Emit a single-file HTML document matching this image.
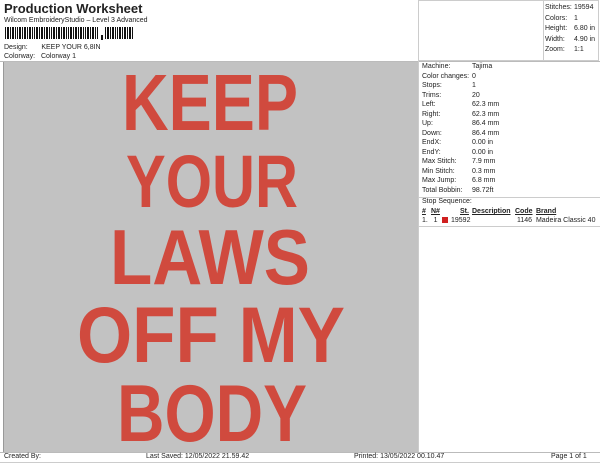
<!DOCTYPE html>
<html><head><style>
body{margin:0;width:600px;height:464px;background:#fff;font-family:"Liberation Sans",sans-serif;color:#222;position:relative;overflow:hidden;font-size:7px}
.a{position:absolute;white-space:nowrap}
</style></head><body>
<div class="a" style="left:4px;top:1px;font-size:13px;font-weight:bold">Production Worksheet</div>
<div class="a" style="left:4px;top:17px">Wilcom EmbroideryStudio – Level 3 Advanced</div>
<svg class="a" style="left:5px;top:27px" width="130" height="14">
<g fill="#111">
<rect x="0" y="0" width="1" height="12"/><rect x="2" y="0" width="2" height="12"/><rect x="5" y="0" width="1" height="12"/><rect x="7" y="0" width="2" height="12"/><rect x="10" y="0" width="1" height="12"/><rect x="12" y="0" width="1" height="12"/><rect x="14" y="0" width="2" height="12"/><rect x="17" y="0" width="1" height="12"/><rect x="19" y="0" width="2" height="12"/><rect x="22" y="0" width="1" height="12"/><rect x="24" y="0" width="2" height="12"/><rect x="27" y="0" width="1" height="12"/><rect x="29" y="0" width="1" height="12"/><rect x="31" y="0" width="2" height="12"/><rect x="34" y="0" width="1" height="12"/><rect x="36" y="0" width="2" height="12"/><rect x="39" y="0" width="1" height="12"/><rect x="41" y="0" width="2" height="12"/><rect x="44" y="0" width="1" height="12"/><rect x="46" y="0" width="1" height="12"/><rect x="48" y="0" width="2" height="12"/><rect x="51" y="0" width="1" height="12"/><rect x="53" y="0" width="2" height="12"/><rect x="56" y="0" width="1" height="12"/><rect x="58" y="0" width="2" height="12"/><rect x="61" y="0" width="1" height="12"/><rect x="63" y="0" width="1" height="12"/><rect x="65" y="0" width="2" height="12"/><rect x="68" y="0" width="1" height="12"/><rect x="70" y="0" width="2" height="12"/><rect x="73" y="0" width="1" height="12"/><rect x="75" y="0" width="2" height="12"/><rect x="78" y="0" width="1" height="12"/><rect x="80" y="0" width="1" height="12"/><rect x="82" y="0" width="2" height="12"/><rect x="85" y="0" width="1" height="12"/><rect x="87" y="0" width="2" height="12"/><rect x="90" y="0" width="1" height="12"/><rect x="92" y="0" width="1" height="12"/>
<rect x="96" y="8" width="2" height="5"/>
<rect x="100" y="0" width="1" height="12"/><rect x="102" y="0" width="2" height="12"/><rect x="105" y="0" width="1" height="12"/><rect x="107" y="0" width="2" height="12"/><rect x="110" y="0" width="1" height="12"/><rect x="112" y="0" width="1" height="12"/><rect x="114" y="0" width="2" height="12"/><rect x="117" y="0" width="1" height="12"/><rect x="119" y="0" width="2" height="12"/><rect x="122" y="0" width="1" height="12"/><rect x="124" y="0" width="2" height="12"/><rect x="127" y="0" width="1" height="12"/>
</g></svg>
<div class="a" style="left:4px;top:44px">Design:&nbsp;&nbsp;&nbsp;&nbsp;&nbsp;&nbsp;&nbsp;KEEP YOUR 6,8IN</div>
<div class="a" style="left:4px;top:53px">Colorway:&nbsp;&nbsp;&nbsp;Colorway 1</div>
<div class="a" style="left:0;top:61px;width:600px;border-top:1px solid #bbb"></div>
<div class="a" style="left:418px;top:0;width:181px;height:61px;border:1px solid #ccc;box-sizing:border-box"></div>
<div class="a" style="left:543px;top:0;height:61px;border-left:1px solid #ccc"></div>
<div class="a" style="left:545px;top:3px;line-height:10.6px">Stitches:<br>Colors:<br>Height:<br>Width:<br>Zoom:</div>
<div class="a" style="left:574px;top:3px;line-height:10.6px">19594<br>1<br>6.80 in<br>4.90 in<br>1:1</div>
<div class="a" style="left:3px;top:62px;width:415px;height:390px;background:#c2c2c2;border-left:1px solid #999"></div>
<svg class="a" style="left:0;top:0" width="420" height="464">
<g fill="#d04a3e" font-family="Liberation Sans, sans-serif" font-weight="bold" text-anchor="middle">
<text x="210" y="130" font-size="80" textLength="176" lengthAdjust="spacingAndGlyphs">KEEP</text>
<text x="212" y="207" font-size="74" textLength="172" lengthAdjust="spacingAndGlyphs">YOUR</text>
<text x="210" y="284" font-size="78" textLength="200" lengthAdjust="spacingAndGlyphs">LAWS</text>
<text x="211" y="362" font-size="79" textLength="268" lengthAdjust="spacingAndGlyphs">OFF MY</text>
<text x="212" y="441" font-size="81" textLength="190" lengthAdjust="spacingAndGlyphs">BODY</text>
</g></svg>
<div class="a" style="left:418px;top:61px;height:391px;border-left:1px solid #ccc"></div>
<div class="a" style="left:422px;top:62px;line-height:9.5px">Machine:<br>Color changes:<br>Stops:<br>Trims:<br>Left:<br>Right:<br>Up:<br>Down:<br>EndX:<br>EndY:<br>Max Stitch:<br>Min Stitch:<br>Max Jump:<br>Total Bobbin:</div>
<div class="a" style="left:472px;top:62px;line-height:9.5px">Tajima<br>0<br>1<br>20<br>62.3 mm<br>62.3 mm<br>86.4 mm<br>86.4 mm<br>0.00 in<br>0.00 in<br>7.9 mm<br>0.3 mm<br>6.8 mm<br>98.72ft</div>
<div class="a" style="left:419px;top:197px;width:181px;border-top:1px solid #ccc"></div>
<div class="a" style="left:422px;top:198px">Stop Sequence:</div>
<div class="a" style="left:422px;top:208px;font-weight:bold;text-decoration:underline">#</div>
<div class="a" style="left:431px;top:208px;font-weight:bold;text-decoration:underline">N#</div>
<div class="a" style="left:460px;top:208px;font-weight:bold;text-decoration:underline">St.</div>
<div class="a" style="left:472px;top:208px;font-weight:bold;text-decoration:underline">Description</div>
<div class="a" style="left:515px;top:208px;font-weight:bold;text-decoration:underline">Code</div>
<div class="a" style="left:536px;top:208px;font-weight:bold;text-decoration:underline">Brand</div>
<div class="a" style="left:422px;top:217px">1.&nbsp;&nbsp;&nbsp;1</div>
<div class="a" style="left:442px;top:217px;width:6px;height:6px;background:#d02020"></div>
<div class="a" style="left:451px;top:217px">19592</div>
<div class="a" style="left:517px;top:217px">1146&nbsp;&nbsp;Madeira Classic 40</div>
<div class="a" style="left:419px;top:226px;width:181px;border-top:1px solid #ccc"></div>
<div class="a" style="left:0;top:452px;width:600px;border-top:1px solid #bbb"></div>
<div class="a" style="left:0;top:462px;width:600px;border-top:1px solid #ccc"></div>
<div class="a" style="left:4px;top:453px">Created By:</div>
<div class="a" style="left:146px;top:453px">Last Saved: 12/05/2022 21.59.42</div>
<div class="a" style="left:354px;top:453px">Printed: 13/05/2022 00.10.47</div>
<div class="a" style="left:551px;top:453px">Page 1 of 1</div>
</body></html>
